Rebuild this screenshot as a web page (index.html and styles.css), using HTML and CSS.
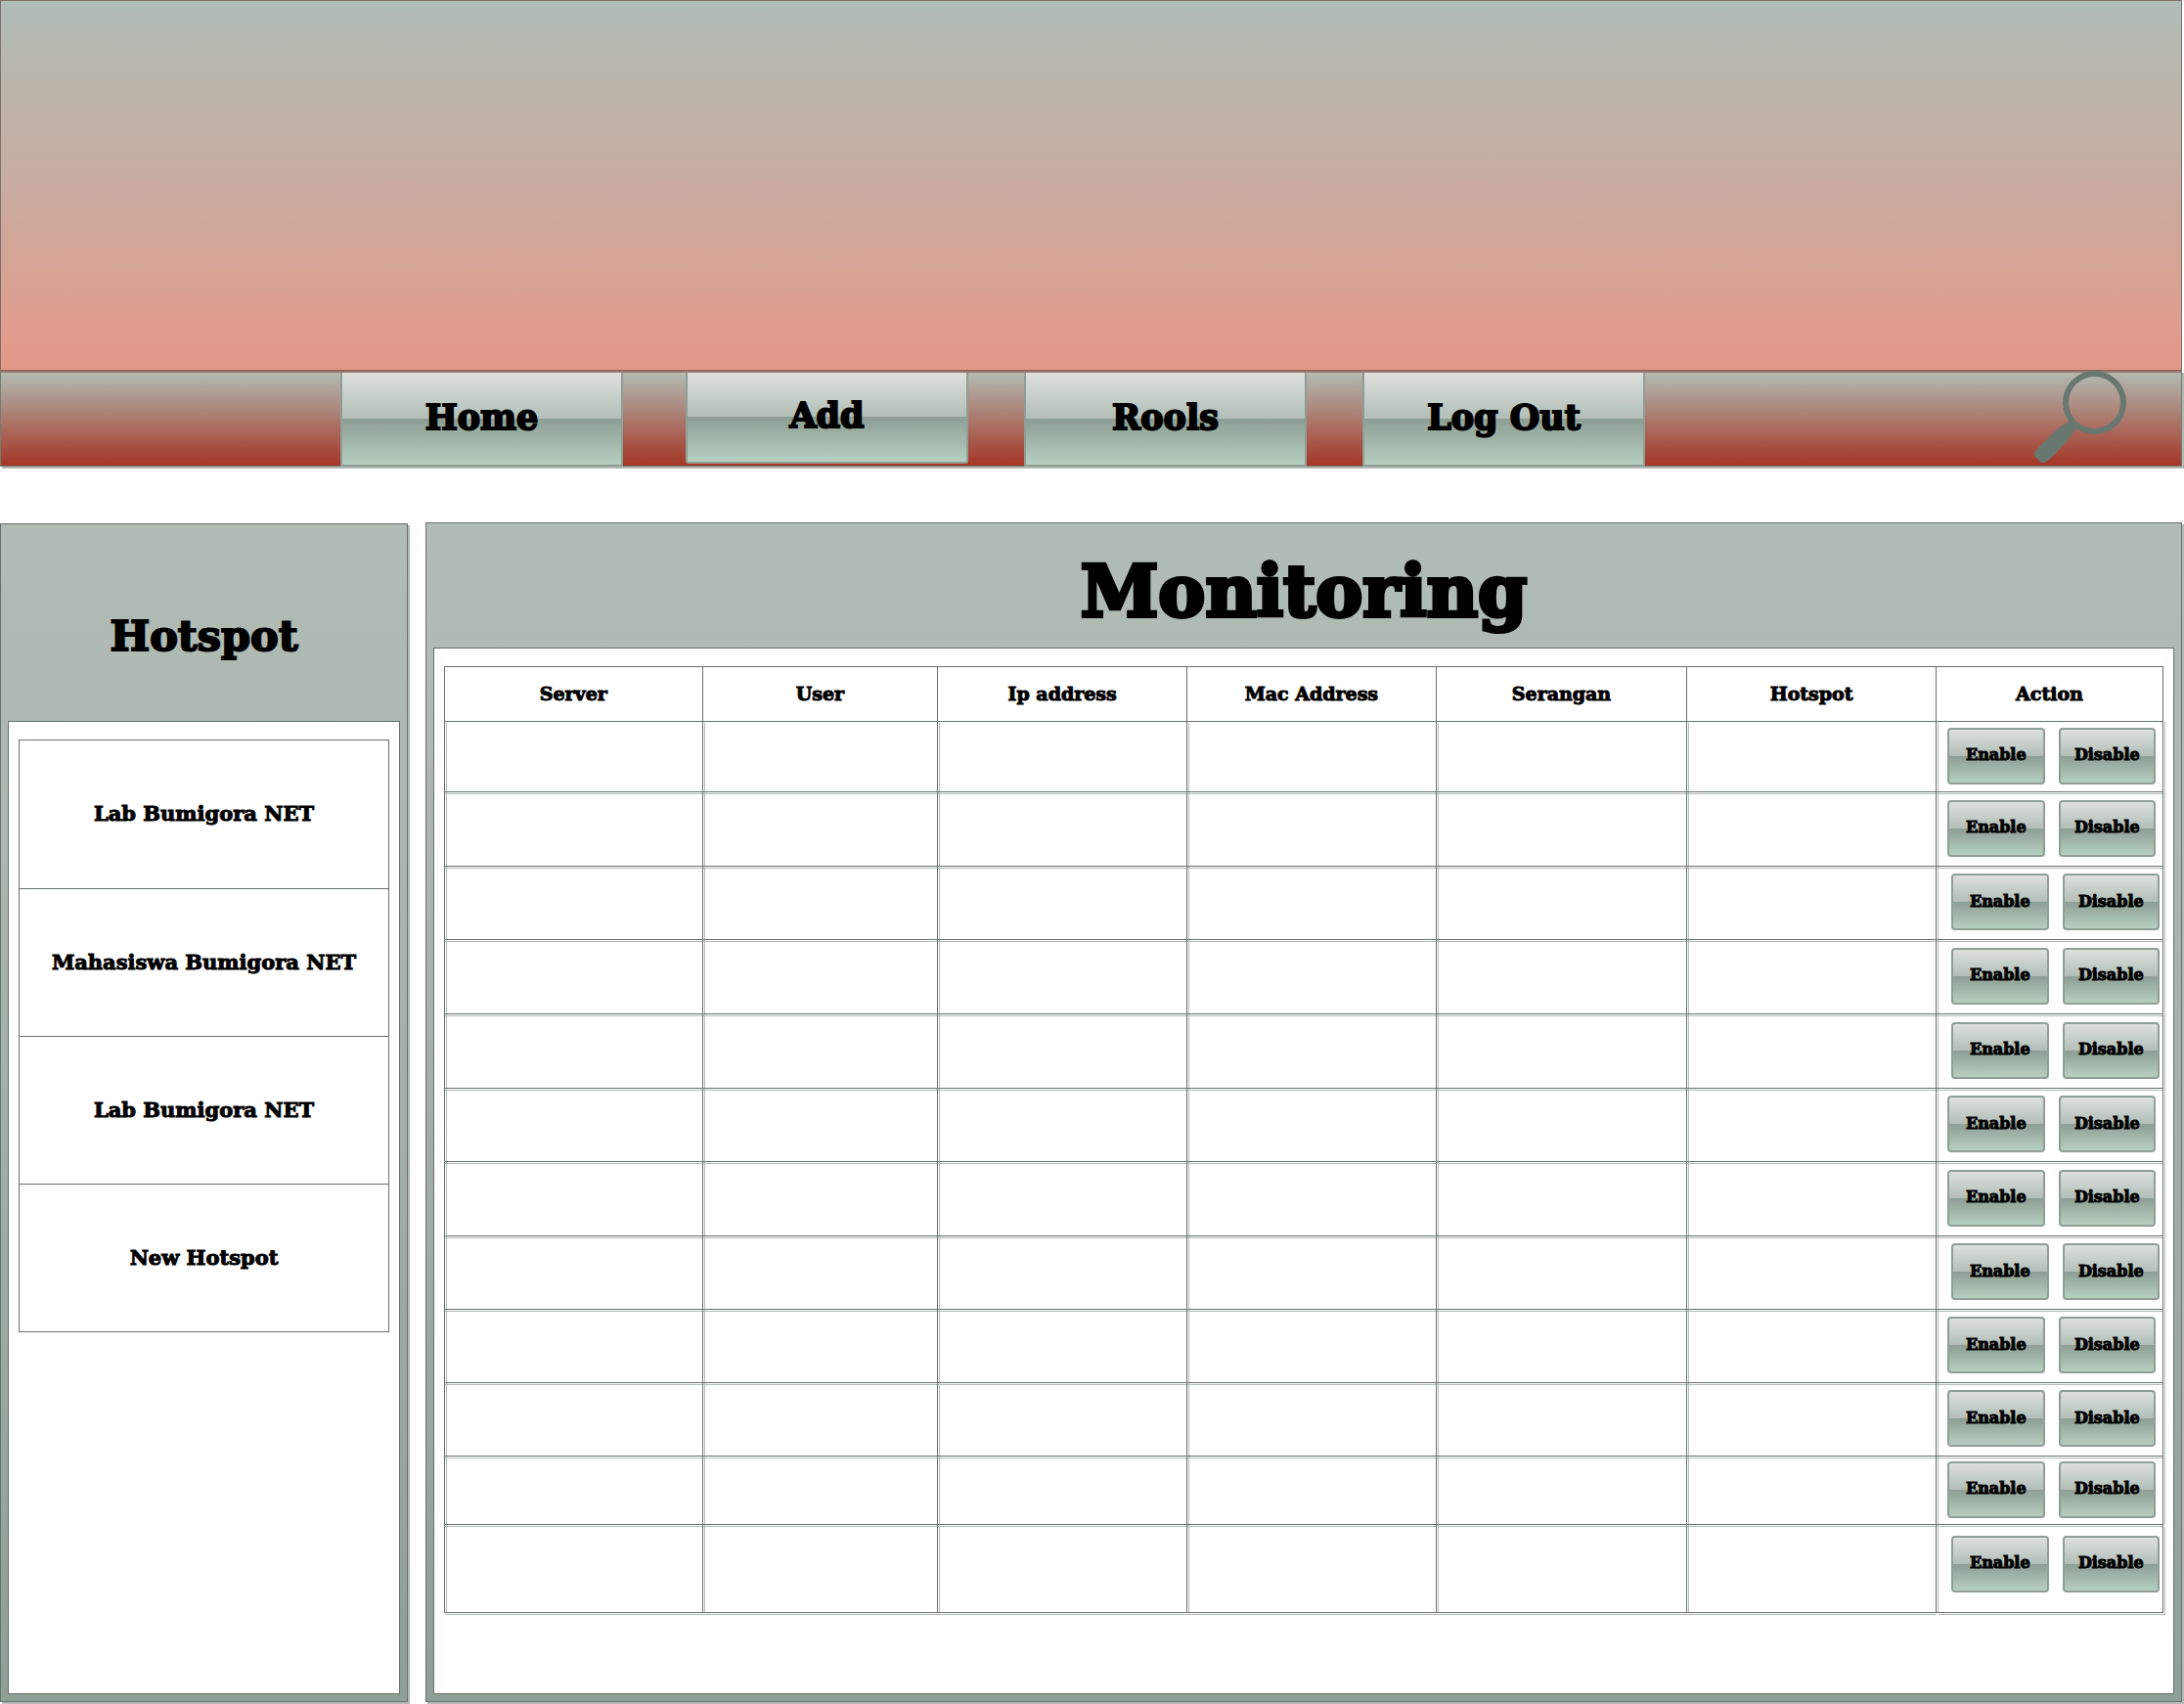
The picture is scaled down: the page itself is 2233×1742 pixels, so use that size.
FILE: index.html
```html
<!DOCTYPE html>
<html lang="id">
<head>
<meta charset="utf-8">
<title>Monitoring</title>
<link rel="stylesheet" href="styles.css">
</head>
<body>
<header class="banner"></header>
<nav class="menu">
  <button class="glossy menu-button" type="button">Home</button>
  <button class="glossy menu-button raised" type="button">Add</button>
  <button class="glossy menu-button" type="button">Rools</button>
  <button class="glossy menu-button" type="button">Log Out</button>
  <button class="search" type="button" aria-label="Search">
    <svg width="98" height="98" viewBox="0 0 98 98" fill="none" aria-hidden="true">
      <path fill="#68786f" fill-rule="evenodd" d="M63.500 0a32.500 32.500 0 1 1 0 65a32.500 32.500 0 0 1 0-65zM63.500 6a26.500 26.500 0 1 0 0 53a26.500 26.500 0 0 0 0-53z"/>
      <path fill="#68786f" d="M34 54L39 50L46 58L42 62Q38 71 17 91Q12 96 8 93L3 88Q0 84 5 80Q27 57 34 54z"/>
    </svg>
  </button>
</nav>
<div class="content">
  <aside class="panel">
    <h2 class="side-title">Hotspot</h2>
    <div class="panel-body">
      <ul class="hotspots">
        <li>Lab Bumigora NET</li>
        <li>Mahasiswa Bumigora NET</li>
        <li>Lab Bumigora NET</li>
        <li>New Hotspot</li>
      </ul>
    </div>
  </aside>
  <main class="panel">
    <h1 class="main-title">Monitoring</h1>
    <div class="panel-body">
      <table class="monitor">
        <colgroup><col class="c-server"><col class="c-user"><col class="c-ip"><col class="c-mac"><col class="c-attack"><col class="c-hotspot"><col class="c-action"></colgroup>
        <thead>
          <tr><th>Server</th><th>User</th><th>Ip address</th><th>Mac Address</th><th>Serangan</th><th>Hotspot</th><th>Action</th></tr>
        </thead>
        <tbody>
          <tr><td></td><td></td><td></td><td></td><td></td><td></td><td><div class="actions"><button class="glossy" type="button">Enable</button><button class="glossy" type="button">Disable</button></div></td></tr>
          <tr><td></td><td></td><td></td><td></td><td></td><td></td><td><div class="actions"><button class="glossy" type="button">Enable</button><button class="glossy" type="button">Disable</button></div></td></tr>
          <tr><td></td><td></td><td></td><td></td><td></td><td></td><td><div class="actions shifted"><button class="glossy" type="button">Enable</button><button class="glossy" type="button">Disable</button></div></td></tr>
          <tr><td></td><td></td><td></td><td></td><td></td><td></td><td><div class="actions shifted"><button class="glossy" type="button">Enable</button><button class="glossy" type="button">Disable</button></div></td></tr>
          <tr><td></td><td></td><td></td><td></td><td></td><td></td><td><div class="actions shifted"><button class="glossy" type="button">Enable</button><button class="glossy" type="button">Disable</button></div></td></tr>
          <tr><td></td><td></td><td></td><td></td><td></td><td></td><td><div class="actions"><button class="glossy" type="button">Enable</button><button class="glossy" type="button">Disable</button></div></td></tr>
          <tr><td></td><td></td><td></td><td></td><td></td><td></td><td><div class="actions"><button class="glossy" type="button">Enable</button><button class="glossy" type="button">Disable</button></div></td></tr>
          <tr><td></td><td></td><td></td><td></td><td></td><td></td><td><div class="actions shifted"><button class="glossy" type="button">Enable</button><button class="glossy" type="button">Disable</button></div></td></tr>
          <tr><td></td><td></td><td></td><td></td><td></td><td></td><td><div class="actions"><button class="glossy" type="button">Enable</button><button class="glossy" type="button">Disable</button></div></td></tr>
          <tr><td></td><td></td><td></td><td></td><td></td><td></td><td><div class="actions"><button class="glossy" type="button">Enable</button><button class="glossy" type="button">Disable</button></div></td></tr>
          <tr><td></td><td></td><td></td><td></td><td></td><td></td><td><div class="actions"><button class="glossy" type="button">Enable</button><button class="glossy" type="button">Disable</button></div></td></tr>
          <tr><td></td><td></td><td></td><td></td><td></td><td></td><td><div class="actions shifted"><button class="glossy" type="button">Enable</button><button class="glossy" type="button">Disable</button></div></td></tr>
        </tbody>
      </table>
    </div>
  </main>
</div>
</body>
</html>
```
FILE: styles.css
```css
:root {
  --line: #68716c;
  --shade: #b4bbb7;
}

* { box-sizing: border-box; }

body {
  margin: 0;
  padding: 0 2px 2px 0;
  min-height: 100vh;
  display: flex;
  flex-direction: column;
  background: #fff;
  color: #000;
  font-family: "Cooper Black", "DejaVu Serif", serif;
  font-weight: 700;
  -webkit-text-stroke: 1px #000;
}

.banner {
  height: 379px;
  border: 1px solid #7d7069;
  border-bottom-color: #8f6459;
  background: linear-gradient(#b0bdb6, #c6aea2 45%, #e59888);
}

.menu {
  height: 98px;
  display: flex;
  align-items: flex-start;
  padding-left: 347px;
  border: 1px solid #6f7f70;
  border-top: 2px solid #98786d;
  background: linear-gradient(#b2bbb3, #a53626);
  box-shadow: 2px 2px 0 #b0bab3;
}

.glossy {
  padding: 0;
  border: 2px solid #8f9e96;
  background: linear-gradient(#dde1de, #b2beb7 50%, #8d9e94 50%, #b6cfbf);
  color: #000;
  font: inherit;
}

.menu-button {
  width: 289px;
  height: 96px;
  margin-right: 57px;
  padding-bottom: 4px;
  border-top: 0;
  font-size: 35px;
  -webkit-text-stroke-width: 2px;
}

.menu-button:first-child { margin-right: 64px; }

.menu-button.raised {
  height: 93px;
  border-radius: 0 0 3px 3px;
}

.search {
  width: 98px;
  height: 98px;
  margin: -2px 54px 0 auto;
  padding: 0;
  border: 0;
  background: none;
}

.search svg { display: block; }

.content {
  flex: 1;
  display: grid;
  grid-template-columns: 417px 1fr;
  gap: 18px;
  margin-top: 57px;
}

.panel {
  display: flex;
  flex-direction: column;
  padding: 0 7px 7px;
  border: 1px solid var(--line);
  background: linear-gradient(#b1bcb6, #aeb8b1 22%, #909f96);
  box-shadow: 2px 2px 0 var(--shade);
}

aside.panel { margin-top: 1px; }

.panel-body {
  flex: 1;
  border: 1px solid var(--line);
  background: #fff;
  padding: 18px 10px;
}

.side-title,
.main-title {
  margin: 0;
  display: flex;
  align-items: center;
  justify-content: center;
  font-weight: 700;
}

.side-title {
  height: 201px;
  padding-top: 26px;
  font-size: 43px;
  -webkit-text-stroke-width: 2px;
}

.main-title {
  height: 127px;
  padding-top: 12px;
  font-size: 72px;
  -webkit-text-stroke-width: 4px;
}

.hotspots {
  margin: 0;
  padding: 0;
  list-style: none;
  border: 1px solid var(--line);
  font-size: 21px;
}

.hotspots li {
  height: 151px;
  padding-bottom: 2px;
  display: flex;
  align-items: center;
  justify-content: center;
}

.hotspots li + li { border-top: 1px solid var(--line); }

.monitor {
  width: 100%;
  table-layout: fixed;
  border-collapse: separate;
  border-spacing: 0;
  border-top: 1px solid var(--line);
  border-left: 1px solid var(--line);
}

.c-server { width: 15%; }
.c-user { width: 13.7%; }
.c-ip { width: 14.5%; }
.c-mac { width: 14.5%; }
.c-attack { width: 14.6%; }
.c-hotspot { width: 14.5%; }
.c-action { width: 13.2%; }

.monitor th,
.monitor td {
  padding: 0 0 2px;
  border-right: 1px solid var(--line);
  border-bottom: 1px solid var(--line);
}

.monitor th {
  height: 56px;
  font-size: 19px;
}

/* Each body line has a pale second line beside it. */
.monitor td {
  height: 76px;
  background:
    linear-gradient(var(--shade), var(--shade)) 1px 0 / 1px 100% no-repeat,
    linear-gradient(var(--shade), var(--shade)) 0 1px / 100% 1px no-repeat;
}

.monitor tr:first-child td {
  height: 72px;
  background: linear-gradient(var(--shade), var(--shade)) 1px 1px / 1px 100% no-repeat;
}

.monitor tr:nth-child(3) td,
.monitor tr:nth-child(6) td,
.monitor tr:nth-child(8) td,
.monitor tr:nth-child(9) td,
.monitor tr:nth-child(10) td { height: 75px; }

.monitor tr:nth-child(11) td { height: 70px; }

.monitor td:last-child { box-shadow: 1px 0 0 #fff, 2px 0 0 var(--shade); }

.monitor tr:last-child td {
  height: 90px;
  padding-bottom: 10px;
  box-shadow: 0 1px 0 #fff, 0 2px 0 var(--shade);
}

.monitor tr:last-child td:last-child { box-shadow: 1px 1px 0 #fff, 2px 2px 0 var(--shade); }

.actions {
  display: flex;
  gap: 14px;
  padding: 0 7px 0 11px;
}

.actions.shifted { padding: 0 3px 0 15px; }

.actions .glossy {
  flex: 1;
  min-width: 0;
  height: 58px;
  padding-bottom: 2px;
  border-radius: 4px;
  font-size: 16px;
}
```
